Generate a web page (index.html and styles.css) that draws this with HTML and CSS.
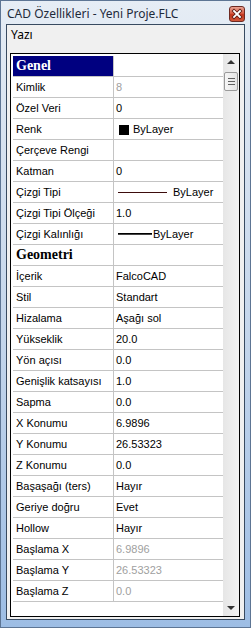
FILE: index.html
```html
<!DOCTYPE html>
<html lang="tr">
<head>
    <meta charset="UTF-8">
    <title>CAD Özellikleri - Yeni Proje.FLC</title>
    <link rel="stylesheet" href="styles.css">
</head>
<body>
    <div class="window">
        <div class="titlebar">
            <span class="title">CAD Özellikleri - Yeni Proje.FLC</span>
            <span class="close">
                <svg width="16" height="16" viewBox="0 0 16 16">
                    <path d="M5 5 L11 11 M11 5 L5 11" stroke="#5a1a12" stroke-width="3.4" stroke-linecap="square"/>
                    <path d="M5 5 L11 11 M11 5 L5 11" stroke="#fff" stroke-width="1.8" stroke-linecap="square"/>
                </svg>
            </span>
        </div>

        <div class="client">
            <div class="tabname">Yazı</div>

            <div class="panel">
                <div class="grid">
                    <!-- Genel -->
                    <div class="row section selected"><div class="label">Genel</div><div class="value"></div></div>
                    <div class="row"><div class="label">Kimlik</div><div class="value dim">8</div></div>
                    <div class="row"><div class="label">Özel Veri</div><div class="value">0</div></div>
                    <div class="row"><div class="label">Renk</div><div class="value"><span class="swatch"></span>ByLayer</div></div>
                    <div class="row"><div class="label">Çerçeve Rengi</div><div class="value"></div></div>
                    <div class="row"><div class="label">Katman</div><div class="value">0</div></div>
                    <div class="row"><div class="label">Çizgi Tipi</div><div class="value"><span class="linetype"></span>ByLayer</div></div>
                    <div class="row"><div class="label">Çizgi Tipi Ölçeği</div><div class="value">1.0</div></div>
                    <div class="row"><div class="label">Çizgi Kalınlığı</div><div class="value"><span class="lineweight"></span>ByLayer</div></div>

                    <!-- Geometri -->
                    <div class="row section"><div class="label">Geometri</div><div class="value"></div></div>
                    <div class="row"><div class="label">İçerik</div><div class="value">FalcoCAD</div></div>
                    <div class="row"><div class="label">Stil</div><div class="value">Standart</div></div>
                    <div class="row"><div class="label">Hizalama</div><div class="value">Aşağı sol</div></div>
                    <div class="row"><div class="label">Yükseklik</div><div class="value">20.0</div></div>
                    <div class="row"><div class="label">Yön açısı</div><div class="value">0.0</div></div>
                    <div class="row"><div class="label">Genişlik katsayısı</div><div class="value">1.0</div></div>
                    <div class="row"><div class="label">Sapma</div><div class="value">0.0</div></div>
                    <div class="row"><div class="label">X Konumu</div><div class="value">6.9896</div></div>
                    <div class="row"><div class="label">Y Konumu</div><div class="value">26.53323</div></div>
                    <div class="row"><div class="label">Z Konumu</div><div class="value">0.0</div></div>
                    <div class="row"><div class="label">Başaşağı (ters)</div><div class="value">Hayır</div></div>
                    <div class="row"><div class="label">Geriye doğru</div><div class="value">Evet</div></div>
                    <div class="row"><div class="label">Hollow</div><div class="value">Hayır</div></div>
                    <div class="row"><div class="label">Başlama X</div><div class="value dim">6.9896</div></div>
                    <div class="row"><div class="label">Başlama Y</div><div class="value dim">26.53323</div></div>
                    <div class="row"><div class="label">Başlama Z</div><div class="value dim">0.0</div></div>
                </div>

                <div class="scrollbar">
                    <div class="arrow up"></div>
                    <div class="thumb">
                        <span></span><span></span><span></span>
                    </div>
                    <div class="track"></div>
                    <div class="arrow down"></div>
                </div>
            </div>
        </div>
    </div>
</body>
</html>
```

FILE: styles.css
```css
body {
    margin: 0;
    padding: 0;
    background: #fff;
}
.window {
    width: 251px;
    height: 628px;
    box-sizing: border-box;
    border: 1px solid #5d7594;
    background: linear-gradient(to bottom, #e6edf5 0%, #dbe5f1 15%, #c3d5eb 55%, #9dbde4 100%);
    display: flex;
    flex-direction: column;
}
.titlebar {
    height: 23px;
    display: flex;
    align-items: center;
    padding: 0 5px 0 6px;
}
.title {
    flex: 1;
    font-family: "Noto Sans", sans-serif;
    font-size: 12px;
    color: #1e2a3a;
    margin-top: 1px;
}
.close {
    width: 16px;
    height: 16px;
    box-sizing: border-box;
    border: 1px solid #6e2a22;
    border-radius: 3px;
    background: linear-gradient(to bottom, #eaa393 0%, #d85c44 45%, #c1351c 55%, #d2573a 100%);
    display: flex;
    margin-top: 3px;
}
.close svg {
    margin: -1px;
}
.client {
    flex: 1;
    margin: 0 5px 7px 5px;
    border: 1px solid #384a60;
    background: #f0f0f0;
    display: flex;
    flex-direction: column;
}
.tabname {
    height: 28px;
    box-sizing: border-box;
    padding: 1px 0 0 4px;
    font-family: "Noto Sans", sans-serif;
    font-size: 12px;
    color: #000;
}
.panel {
    flex: 1;
    margin: 0 4px 2px 3px;
    border: 1px solid #000;
    background: #fff;
    display: flex;
}
.grid {
    flex: 1;
    padding: 2px 0 0 2px;
}
.row {
    display: flex;
    height: 20px;
    border-bottom: 1px solid #c4c4c4;
    font-family: "Liberation Sans", Arial, sans-serif;
    font-size: 11px;
    color: #000;
}
.label {
    width: 97px;
    padding-left: 3px;
    border-right: 1px solid #c4c4c4;
    display: flex;
    align-items: center;
    white-space: nowrap;
}
.value {
    flex: 1;
    padding-left: 2px;
    display: flex;
    align-items: center;
    white-space: nowrap;
}
.dim {
    color: #a0a0a0;
}
.section .label {
    font-family: "Liberation Serif", "Times New Roman", serif;
    font-weight: bold;
    font-size: 14px;
}
.selected .label {
    background: #000080;
    color: #fff;
}
.swatch {
    width: 10px;
    height: 10px;
    background: #000;
    margin: 1px 4px 0 3px;
}
.linetype {
    width: 49px;
    height: 1px;
    background: #3c0c0c;
    margin: 0 6px 0 2px;
}
.lineweight {
    width: 34px;
    height: 1px;
    background: #000;
    margin: 0 1px 0 2px;
    border-bottom: 1px solid #444;
}
.scrollbar {
    width: 16px;
    background: linear-gradient(to right, #e6e6e6, #f2f2f2);
    display: flex;
    flex-direction: column;
}
.arrow {
    height: 17px;
    display: flex;
    align-items: center;
    justify-content: center;
}
.up {
    height: 18px;
}
.arrow::before {
    content: "";
    border-left: 4px solid transparent;
    border-right: 4px solid transparent;
}
.up::before {
    border-bottom: 4px solid #333;
    margin-bottom: 3px;
}
.down::before {
    border-top: 4px solid #333;
}
.thumb {
    height: 19px;
    margin: 0 1px;
    box-sizing: border-box;
    border: 1px solid #9a9a9a;
    border-radius: 2px;
    background: linear-gradient(to right, #f6f6f6, #e4e4e4);
    display: flex;
    flex-direction: column;
    align-items: center;
    justify-content: center;
    gap: 2px;
}
.thumb span {
    width: 7px;
    height: 1px;
    background: #606060;
}
.track {
    flex: 1;
}
```
